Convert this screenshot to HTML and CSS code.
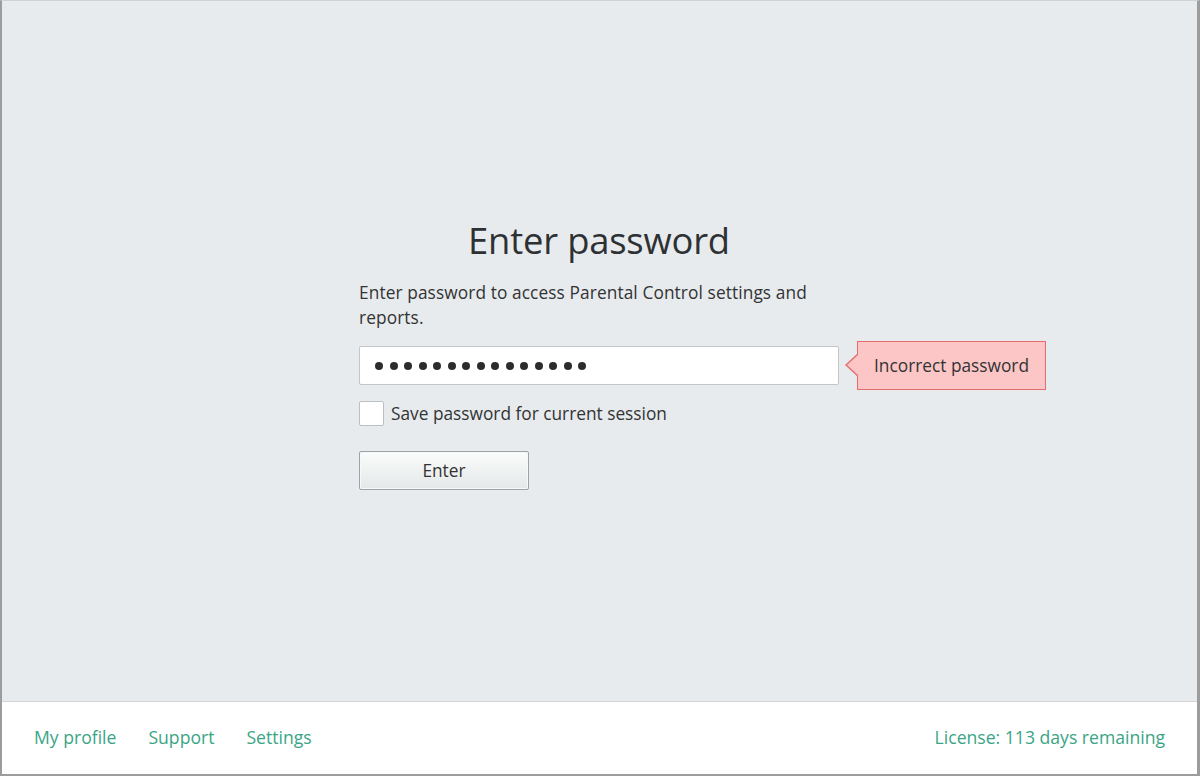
FILE: index.html
```html
<!DOCTYPE html>
<html>
<head>
<meta charset="utf-8">
<link rel="stylesheet" href="styles.css">
</head>
<body>
<div class="window">
  <main class="main">
    <div class="panel">
      <h1 class="title">Enter password</h1>
      <p class="desc">Enter password to access Parental Control settings and reports.</p>
      <div class="field-row">
        <div class="input">
          <span class="dot"></span><span class="dot"></span><span class="dot"></span><span class="dot"></span><span class="dot"></span><span class="dot"></span><span class="dot"></span><span class="dot"></span><span class="dot"></span><span class="dot"></span><span class="dot"></span><span class="dot"></span><span class="dot"></span><span class="dot"></span><span class="dot"></span>
        </div>
        <div class="tooltip">Incorrect password</div>
      </div>
      <label class="check-row">
        <span class="checkbox"></span>
        <span class="check-label">Save password for current session</span>
      </label>
      <button class="btn">Enter</button>
    </div>
  </main>
  <footer class="footer">
    <nav class="links">
      <a class="link">My profile</a>
      <a class="link">Support</a>
      <a class="link">Settings</a>
    </nav>
    <a class="link">License: 113 days remaining</a>
  </footer>
</div>
</body>
</html>
```
FILE: styles.css
```css
html, body {
  margin: 0;
  padding: 0;
}
body {
  width: 1200px;
  height: 776px;
  font-family: "Open Sans", "Noto Sans", sans-serif;
  color: #333;
  overflow: hidden;
}
.window {
  box-sizing: border-box;
  width: 1200px;
  height: 776px;
  border-left: 2px solid #9c9c9c;
  border-right: 3px solid #9c9c9c;
  border-bottom: 2px solid #9c9c9c;
  border-top: 1px solid #cfd2d4;
  background: #e7ebee;
  display: flex;
  flex-direction: column;
}
.main {
  flex: 1;
  display: flex;
  justify-content: flex-start;
  padding-left: 357px;
  padding-top: 214px;
}
.panel {
  width: 480px;
  display: flex;
  flex-direction: column;
}
.title {
  margin: 0;
  text-align: center;
  font-weight: 400;
  font-size: 36.4px;
  line-height: 50px;
  color: #2e3133;
  letter-spacing: -0.2px;
}
.desc {
  margin: 15px 0 0 0;
  font-size: 17.3px;
  line-height: 25px;
  letter-spacing: 0.1px;
  width: 480px;
  color: #333;
}
.field-row {
  position: relative;
  margin-top: 16px;
}
.input {
  box-sizing: border-box;
  width: 480px;
  height: 39px;
  background: #fff;
  border: 1px solid #c3c6c8;
  border-radius: 2px;
  display: flex;
  align-items: center;
  gap: 6.5px;
  padding-left: 15px;
}
.dot {
  width: 8px;
  height: 8px;
  border-radius: 50%;
  background: #2c2c2c;
}
.tooltip {
  position: absolute;
  left: 498px;
  top: -5px;
  box-sizing: border-box;
  width: 189px;
  height: 49px;
  background: #fcc6c6;
  border: 1px solid #e46d6d;
  font-size: 17.3px;
  line-height: 47px;
  text-align: center;
  color: #333;
  white-space: nowrap;
}
.tooltip::before {
  content: "";
  position: absolute;
  left: -13px;
  top: 11px;
  border-style: solid;
  border-width: 12px 13px 12px 0;
  border-color: transparent #e46d6d transparent transparent;
}
.tooltip::after {
  content: "";
  position: absolute;
  left: -11px;
  top: 12px;
  border-style: solid;
  border-width: 11px 12px 11px 0;
  border-color: transparent #fcc6c6 transparent transparent;
}
.check-row {
  display: flex;
  align-items: center;
  margin-top: 16px;
  gap: 7px;
}
.checkbox {
  box-sizing: border-box;
  width: 25px;
  height: 25px;
  background: #fff;
  border: 1px solid #bcc0c2;
  border-radius: 2px;
}
.check-label {
  font-size: 17.3px;
  color: #333;
}
.btn {
  box-sizing: border-box;
  margin-top: 25px;
  width: 170px;
  height: 39px;
  border: 1px solid #9ea2a4;
  border-radius: 2px;
  background: linear-gradient(#fbfcfc, #e4e8e8);
  box-shadow: inset 0 0 0 1px #f7f9f9;
  font-family: "Open Sans", "Noto Sans", sans-serif;
  font-size: 17.3px;
  color: #333;
  padding: 0;
}
.footer {
  height: 73px;
  box-sizing: border-box;
  background: #fff;
  border-top: 1px solid #d3d6d8;
  display: flex;
  align-items: center;
  justify-content: space-between;
  padding: 0 32px 2px 32px;
}
.links {
  display: flex;
  gap: 32px;
}
.link {
  color: #3aa586;
  font-size: 17.6px;
  text-decoration: none;
}
```
